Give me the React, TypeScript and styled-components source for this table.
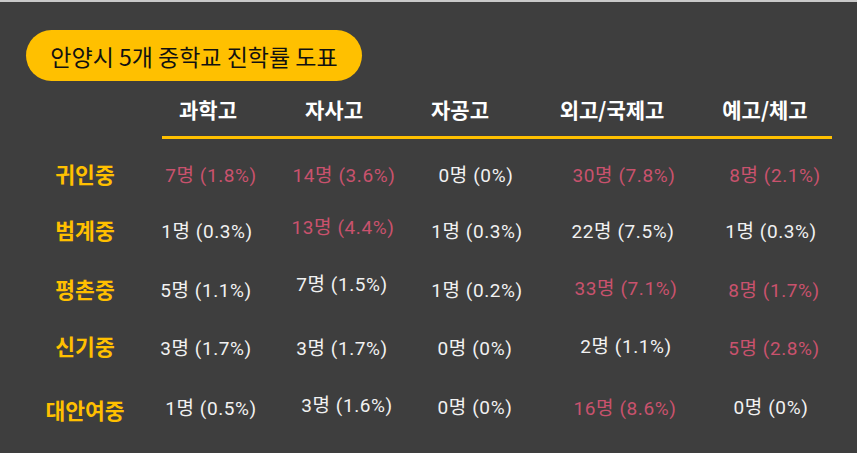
import React from "react";
import styled, { createGlobalStyle } from "styled-components";

const Global = createGlobalStyle`
  html, body { margin: 0; padding: 0; background: #3e3e3e; }
  body { font-family: Roboto, "Noto Sans CJK KR", sans-serif; }
`;

const Page = styled.div`
  box-sizing: border-box;
  width: 857px;
  height: 453px;
  background: #3e3e3e;
  border-top: 2px solid #c9c9c9;
  padding: 28px 0 0 20px;
  overflow: hidden;
`;

const TitlePill = styled.div`
  display: flex;
  align-items: center;
  justify-content: center;
  box-sizing: border-box;
  height: 51px;
  margin-left: 6px;
  width: 336px;
  border-radius: 26px;
  background: #ffc000;
  color: #111;
  font-family: "Noto Sans CJK KR", sans-serif;
  font-size: 23px;
  font-weight: 400;
  white-space: nowrap;
`;

const Table = styled.div`
  display: grid;
  grid-template-columns: 130px 116px 148px 122px 172px 128px;
`;

const HeadCell = styled.div<{ $dx?: number }>`
  height: 55px;
  display: flex;
  align-items: center;
  justify-content: center;
  color: #fff;
  font-family: "Noto Sans CJK KR", sans-serif;
  font-weight: 700;
  font-size: 21px;
  white-space: nowrap;
  transform: translateX(${(p) => p.$dx ?? 0}px);
`;

const Underline = styled.div`
  grid-column: 2 / -1;
  height: 3px;
  margin: 0 4px 5px 12px;
  background: #ffc000;
`;

const RowLabel = styled.div<{ $dy?: number }>`
  height: 58px;
  display: flex;
  align-items: center;
  justify-content: center;
  color: #ffc000;
  font-family: "Noto Sans CJK KR", sans-serif;
  font-weight: 700;
  font-size: 21.5px;
  white-space: nowrap;
  transform: translateY(${(p) => p.$dy ?? 0}px);
`;

const Cell = styled.div<{ $hi?: boolean; $dx?: number; $dy?: number }>`
  height: 58px;
  display: flex;
  align-items: center;
  justify-content: center;
  white-space: nowrap;
  font-family: Roboto, "Noto Sans CJK KR", sans-serif;
  font-size: 19px;
  letter-spacing: 0.6px;
  color: ${(p) => (p.$hi ? "#c9526d" : "#f1f1f1")};
  transform: translate(${(p) => p.$dx ?? 0}px, ${(p) => p.$dy ?? 0}px);
`;

const headers: [string, number][] = [
  ["과학고", 0],
  ["자사고", -6],
  ["자공고", -15],
  ["외고/국제고", -10],
  ["예고/체고", -7],
];

type C = { t: string; hi?: boolean; dx?: number; dy?: number };
type R = { name: string; dy?: number; cells: C[] };

const rows: R[] = [
  {
    name: "귀인중",
    cells: [
      { t: "7명 (1.8%)", hi: true, dx: 3 },
      { t: "14명 (3.6%)", hi: true, dx: 4 },
      { t: "0명 (0%)", dx: 1 },
      { t: "30명 (7.8%)", hi: true, dx: 2 },
      { t: "8명 (2.1%)", hi: true, dx: 3 },
    ],
  },
  {
    name: "범계중",
    dy: -2,
    cells: [
      { t: "1명 (0.3%)", dx: -1, dy: -2 },
      { t: "13명 (4.4%)", hi: true, dx: 3, dy: -6 },
      { t: "1명 (0.3%)", dx: 2, dy: -2 },
      { t: "22명 (7.5%)", dx: 1, dy: -2 },
      { t: "1명 (0.3%)", dx: -1, dy: -2 },
    ],
  },
  {
    name: "평촌중",
    dy: -1,
    cells: [
      { t: "5명 (1.1%)", dx: -2, dy: -1 },
      { t: "7명 (1.5%)", dx: 2, dy: -7 },
      { t: "1명 (0.2%)", dx: 2, dy: -1 },
      { t: "33명 (7.1%)", hi: true, dx: 4, dy: -3 },
      { t: "8명 (1.7%)", hi: true, dx: 2, dy: -1 },
    ],
  },
  {
    name: "신기중",
    dy: -2,
    cells: [
      { t: "3명 (1.7%)", dx: -2, dy: -1 },
      { t: "3명 (1.7%)", dx: 2, dy: -1 },
      { t: "0명 (0%)", dx: 0, dy: -1 },
      { t: "2명 (1.1%)", dx: 4, dy: -3 },
      { t: "5명 (2.8%)", hi: true, dx: 2, dy: -1 },
    ],
  },
  {
    name: "대안여중",
    dy: 4,
    cells: [
      { t: "1명 (0.5%)", dx: 3, dy: 1 },
      { t: "3명 (1.6%)", dx: 7, dy: -2 },
      { t: "0명 (0%)", dx: 0, dy: 0 },
      { t: "16명 (8.6%)", hi: true, dx: 3, dy: 1 },
      { t: "0명 (0%)", dx: -1, dy: 0 },
    ],
  },
];

export default function App() {
  return (
    <Page>
      <Global />
      <TitlePill>안양시 5개 중학교 진학률 도표</TitlePill>
      <Table>
        <div />
        {headers.map(([h, dx]) => (
          <HeadCell key={h} $dx={dx}>
            {h}
          </HeadCell>
        ))}
        <Underline />
        {rows.map((r) => (
          <React.Fragment key={r.name}>
            <RowLabel $dy={r.dy}>{r.name}</RowLabel>
            {r.cells.map((c, i) => (
              <Cell key={i} $hi={c.hi} $dx={c.dx} $dy={c.dy}>
                {c.t}
              </Cell>
            ))}
          </React.Fragment>
        ))}
      </Table>
    </Page>
  );
}
